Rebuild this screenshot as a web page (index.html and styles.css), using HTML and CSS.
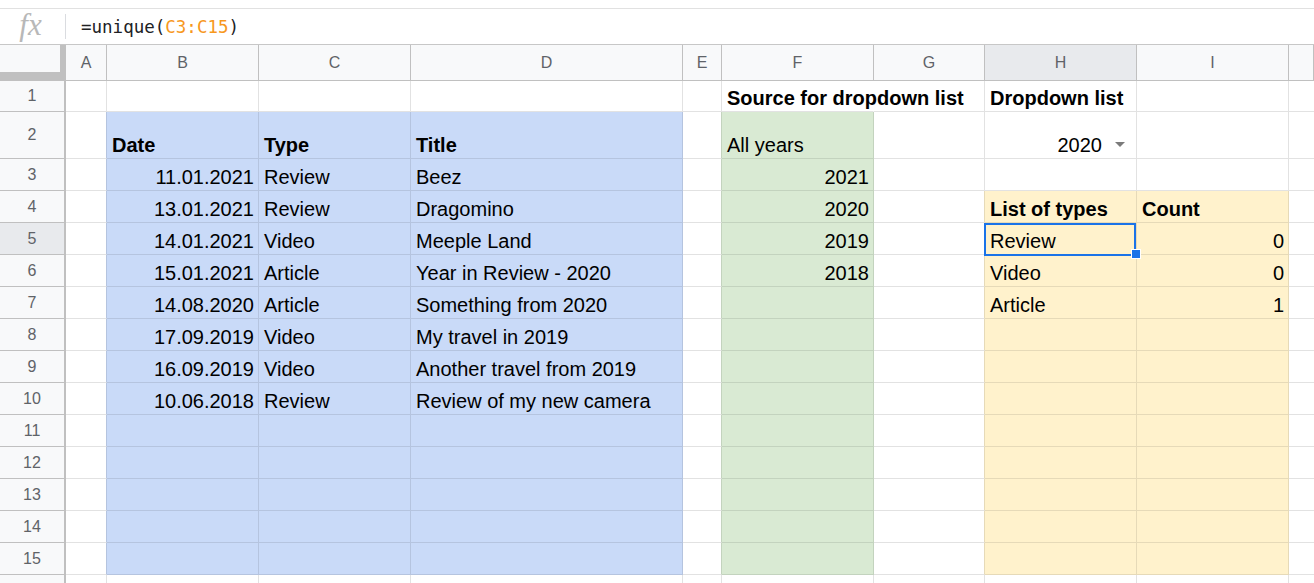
FILE: index.html
```html
<!DOCTYPE html>
<html>
<head>
<meta charset="utf-8">
<link rel="stylesheet" href="styles.css">
</head>
<body>
<div class="fbar">
  <div class="fx">fx</div>
  <div class="fsep"></div>
  <div class="ftext">=unique(<span class="ref">C3:C15</span>)</div>
</div>
<div class="sheet">
  <div class="corner"></div>
  <div class="ch">A</div><div class="ch">B</div><div class="ch">C</div><div class="ch">D</div><div class="ch">E</div><div class="ch">F</div><div class="ch">G</div><div class="ch sel">H</div><div class="ch">I</div><div class="ch last"></div>

  <div class="rh">1</div>
  <div class="c"></div><div class="c"></div><div class="c"></div><div class="c"></div><div class="c"></div>
  <div class="c b nb">Source for dropdown list</div><div class="c"></div><div class="c b">Dropdown list</div><div class="c"></div><div class="c last"></div>

  <div class="rh">2</div>
  <div class="c eb"></div><div class="c bl b">Date</div><div class="c bl b">Type</div><div class="c bl b">Title</div><div class="c eg"></div>
  <div class="c gr">All years</div><div class="c"></div>
  <div class="c dd"><span>2020</span><svg class="arrow" width="10" height="5" viewBox="0 0 10 5"><polygon points="0,0 10,0 5,5" fill="#7b7b7b"/></svg></div>
  <div class="c"></div><div class="c last"></div>

  <div class="rh">3</div>
  <div class="c eb"></div><div class="c bl r">11.01.2021</div><div class="c bl">Review</div><div class="c bl">Beez</div><div class="c eg"></div>
  <div class="c gr r">2021</div><div class="c"></div><div class="c"></div><div class="c"></div><div class="c last"></div>

  <div class="rh">4</div>
  <div class="c eb"></div><div class="c bl r">13.01.2021</div><div class="c bl">Review</div><div class="c bl">Dragomino</div><div class="c eg"></div>
  <div class="c gr r">2020</div><div class="c ey"></div><div class="c ye b">List of types</div><div class="c ye b">Count</div><div class="c last"></div>

  <div class="rh sel">5</div>
  <div class="c eb"></div><div class="c bl r">14.01.2021</div><div class="c bl">Video</div><div class="c bl">Meeple Land</div><div class="c eg"></div>
  <div class="c gr r">2019</div><div class="c ey"></div>
  <div class="c ye active">Review<div class="selbox"></div><div class="handle"></div></div>
  <div class="c ye r">0</div><div class="c last"></div>

  <div class="rh">6</div>
  <div class="c eb"></div><div class="c bl r">15.01.2021</div><div class="c bl">Article</div><div class="c bl">Year in Review - 2020</div><div class="c eg"></div>
  <div class="c gr r">2018</div><div class="c ey"></div><div class="c ye">Video</div><div class="c ye r">0</div><div class="c last"></div>

  <div class="rh">7</div>
  <div class="c eb"></div><div class="c bl r">14.08.2020</div><div class="c bl">Article</div><div class="c bl">Something from 2020</div><div class="c eg"></div>
  <div class="c gr"></div><div class="c ey"></div><div class="c ye">Article</div><div class="c ye r">1</div><div class="c last"></div>

  <div class="rh">8</div>
  <div class="c eb"></div><div class="c bl r">17.09.2019</div><div class="c bl">Video</div><div class="c bl">My travel in 2019</div><div class="c eg"></div>
  <div class="c gr"></div><div class="c ey"></div><div class="c ye"></div><div class="c ye"></div><div class="c last"></div>

  <div class="rh">9</div>
  <div class="c eb"></div><div class="c bl r">16.09.2019</div><div class="c bl">Video</div><div class="c bl">Another travel from 2019</div><div class="c eg"></div>
  <div class="c gr"></div><div class="c ey"></div><div class="c ye"></div><div class="c ye"></div><div class="c last"></div>

  <div class="rh">10</div>
  <div class="c eb"></div><div class="c bl r">10.06.2018</div><div class="c bl">Review</div><div class="c bl">Review of my new camera</div><div class="c eg"></div>
  <div class="c gr"></div><div class="c ey"></div><div class="c ye"></div><div class="c ye"></div><div class="c last"></div>

  <div class="rh">11</div>
  <div class="c eb"></div><div class="c bl"></div><div class="c bl"></div><div class="c bl"></div><div class="c eg"></div>
  <div class="c gr"></div><div class="c ey"></div><div class="c ye"></div><div class="c ye"></div><div class="c last"></div>

  <div class="rh">12</div>
  <div class="c eb"></div><div class="c bl"></div><div class="c bl"></div><div class="c bl"></div><div class="c eg"></div>
  <div class="c gr"></div><div class="c ey"></div><div class="c ye"></div><div class="c ye"></div><div class="c last"></div>

  <div class="rh">13</div>
  <div class="c eb"></div><div class="c bl"></div><div class="c bl"></div><div class="c bl"></div><div class="c eg"></div>
  <div class="c gr"></div><div class="c ey"></div><div class="c ye"></div><div class="c ye"></div><div class="c last"></div>

  <div class="rh">14</div>
  <div class="c eb"></div><div class="c bl"></div><div class="c bl"></div><div class="c bl"></div><div class="c eg"></div>
  <div class="c gr"></div><div class="c ey"></div><div class="c ye"></div><div class="c ye"></div><div class="c last"></div>

  <div class="rh">15</div>
  <div class="c eb"></div><div class="c bl"></div><div class="c bl"></div><div class="c bl"></div><div class="c eg"></div>
  <div class="c gr"></div><div class="c ey"></div><div class="c ye"></div><div class="c ye"></div><div class="c last"></div>

  <div class="rh"></div>
  <div class="c"></div><div class="c"></div><div class="c"></div><div class="c"></div><div class="c"></div>
  <div class="c"></div><div class="c"></div><div class="c"></div><div class="c"></div><div class="c last"></div>
</div>
</body>
</html>
```
FILE: styles.css
```css
* { box-sizing: border-box; }

body {
  margin: 0;
  background: #ffffff;
  overflow: hidden;
  font-family: "Liberation Sans", Arial, sans-serif;
}

/* formula bar */
.fbar {
  margin-top: 8px;
  height: 37px;
  border-top: 1px solid #e1e1e1;
  border-bottom: 1px solid #c7c7c7;
  display: flex;
  align-items: center;
}
.fx {
  width: 65px;
  padding-right: 4px;
  padding-bottom: 4px;
  text-align: center;
  font: italic 31px "Liberation Serif", serif;
  color: #b8b8b8;
  line-height: 30px;
}
.fsep {
  width: 1px;
  height: 25px;
  background: #dadce0;
}
.ftext {
  margin-left: 15px;
  font: 17.5px "DejaVu Sans Mono", "Liberation Mono", monospace;
  color: #202124;
  white-space: nowrap;
}
.ref { color: #f7981d; }

/* sheet grid */
.sheet {
  display: grid;
  grid-template-columns: 66px 41px 152px 152px 272px 39px 152px 111px 152px 152px 1fr;
  grid-template-rows: 36px 31px 47px repeat(14, 32px);
}

.corner {
  background: #f8f9fa;
  border-right: 6px solid #c0c0c0;
  border-bottom: 9px solid #c0c0c0;
}

.ch {
  background: #f8f9fa;
  border-right: 1px solid #c0c0c0;
  border-bottom: 1px solid #c0c0c0;
  display: flex;
  align-items: center;
  justify-content: center;
  font-size: 16px;
  color: #5f6368;
}

.rh {
  background: #f8f9fa;
  border-right: 2px solid #c0c0c0;
  border-bottom: 1px solid #c0c0c0;
  display: flex;
  align-items: center;
  justify-content: center;
  font-size: 16px;
  color: #5f6368;
}

.sel { background: #e8eaed; }

.c {
  border-right: 1px solid #e2e2e2;
  border-bottom: 1px solid #e2e2e2;
  display: flex;
  align-items: flex-end;
  padding: 0 4px 1px 5px;
  font-size: 20px;
  line-height: 23px;
  color: #000;
  white-space: nowrap;
  min-width: 0;
}

.c.last { border-right: none; }
.r { justify-content: flex-end; }
.b { font-weight: bold; }
.nb { border-right-color: transparent; }

.bl { background: #c9daf8; border-color: #b5c4df; }
.gr { background: #d9ead3; border-color: #c3d3be; }
.ye { background: #fff2cc; border-color: #e6dab8; }

.eb { border-right-color: #b5c4df; }
.eg { border-right-color: #c3d3be; }
.ey { border-right-color: #e6dab8; }

/* dropdown cell */
.dd {
  justify-content: flex-end;
  padding-right: 11px;
}
.arrow {
  margin-left: 13px;
  margin-bottom: 10px;
  flex: none;
}

/* active cell */
.active { position: relative; }
.selbox {
  position: absolute;
  left: -1px;
  top: 0;
  width: 152px;
  height: 33px;
  border: 2px solid #1a73e8;
  z-index: 2;
}
.handle {
  position: absolute;
  left: 146px;
  top: 26px;
  width: 10px;
  height: 10px;
  background: #1a73e8;
  border: 1px solid #ffffff;
  z-index: 3;
}
```
